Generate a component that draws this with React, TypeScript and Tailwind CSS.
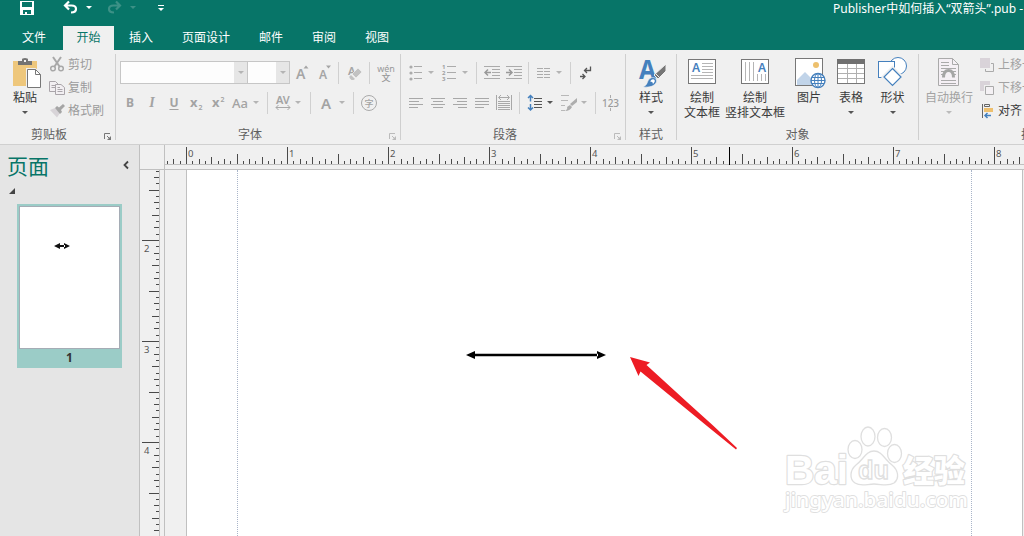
import type { ReactNode } from 'react';

const TABS = [
  { label: '文件', style: 'w-[58px] text-white' },
  { label: '开始', style: 'w-[51px] bg-[#f0f0f0] text-[#077568]' },
  { label: '插入', style: 'w-[54px] text-white' },
  { label: '页面设计', style: 'w-[76px] text-white' },
  { label: '邮件', style: 'w-[54px] text-white' },
  { label: '审阅', style: 'w-[52px] text-white' },
  { label: '视图', style: 'w-[54px] text-white' },
];

const INCH = 101;

function Caret({ className = '', color = '#b4b4b4' }: { className?: string; color?: string }) {
  return (
    <svg className={`shrink-0 ${className}`} width="6" height="3" viewBox="0 0 6 3">
      <path d="M0 0H6L3 3Z" fill={color} />
    </svg>
  );
}

function Sep({ className = '' }: { className?: string }) {
  return <div className={`w-px h-[22px] shrink-0 bg-[#d0d0d0] ${className}`} />;
}

function GroupSep() {
  return <div className="mt-1 h-[86px] w-px shrink-0 bg-[#cfcfcf]" />;
}

interface GroupProps {
  label: string;
  width: string;
  launcher?: string;
  labelStyle?: string;
  children: ReactNode;
}

function Group({ label, width, launcher, labelStyle = 'text-center', children }: GroupProps) {
  return (
    <div className={`flex shrink-0 flex-col ${width}`}>
      <div className="h-[75px] shrink-0">{children}</div>
      <div className="flex h-[18px] items-center">
        <span className={`flex-1 pt-px text-[#5f5f5f] ${labelStyle}`}>{label}</span>
        {launcher && (
          <svg className="mt-[5px] mr-1 shrink-0" width="7" height="7" viewBox="0 0 7 7" stroke={launcher} fill="none">
            <path d="M0.500 6V0.500H6M3 3L5.500 5.500" />
            <path d="M7 3V7H3Z" fill={launcher} stroke="none" />
          </svg>
        )}
      </div>
    </div>
  );
}

function Icon({ w, h = 16, className = '', children }: { w: number; h?: number; className?: string; children: ReactNode }) {
  return (
    <svg className={`shrink-0 overflow-visible ${className}`} width={w} height={h} viewBox={`0 0 ${w} ${h}`} fill="none">
      {children}
    </svg>
  );
}

function ClipboardGroup() {
  return (
    <Group label="剪贴板" width="w-[115px]" launcher="#777" labelStyle="text-center pr-[6px]">
      <div className="flex">
        <div className="flex w-[50px] flex-col items-center pt-2 text-[#333]">
          <Icon w={28} h={30} className="ml-[4px]">
            <path d="M0 3H24V28H0Z" fill="#eec77c" />
            <path d="M5 7V3H9V1.500Q9 0 12 0Q15 0 15 1.500V3H19V7Z" fill="#737373" />
            <path d="M11 2H13V4H11Z" fill="#f0f0f0" />
            <path d="M13 10H22.500L28 15V30H13Z" fill="#f0f0f0" />
            <path d="M14.500 11.500H22.500L27.500 16.500V29.500H14.500Z" fill="#fff" stroke="#777" />
            <path d="M22.500 11.500V16.500H27.500" stroke="#777" />
          </Icon>
          <span className="mt-px leading-[18px]">粘贴</span>
          <Caret className="mt-[4px]" color="#555" />
        </div>
        <div className="flex flex-col pt-[3px] text-[#9b9b9b]">
          <div className="flex h-[23px] items-center gap-1">
            <Icon w={14} h={15}>
              <g stroke="#a8a8a8" strokeWidth="1.500">
                <path d="M3 0L9.500 9.500M11 0L4.500 9.500" strokeWidth="2" />
                <circle cx="3" cy="11.500" r="2.300" />
                <circle cx="11" cy="11.500" r="2.300" />
              </g>
            </Icon>
            剪切
          </div>
          <div className="flex h-[23px] items-center gap-1">
            <Icon w={14} h={14}>
              <g stroke="#aaa5aa" fill="#f2eff2">
                <path d="M-0.500 0.500H5.500L8.500 3.500V10.500H-0.500Z" />
                <path d="M1.500 4.500H5M1.500 6.500H5" />
                <path d="M5.500 3.500H11L14.500 6.500V13.500H5.500Z" />
                <path d="M7.500 6.500H10M7.500 8.500H12.500M7.500 10.500H12.500" />
              </g>
            </Icon>
            复制
          </div>
          <div className="flex h-[23px] items-center gap-1">
            <Icon w={15} h={14} className="-mr-px">
              <path d="M0 6L5 4L10 9L7 13.500Z" fill="#d8d4d8" />
              <path d="M5 4L7 2L9 3.500L13 0L15 2L11 6L12 8L10 10Z" fill="#a5a5a5" />
            </Icon>
            格式刷
          </div>
        </div>
      </div>
    </Group>
  );
}

function FontGroup() {
  return (
    <Group label="字体" width="w-[284px]" launcher="#bbb" labelStyle="text-center pr-[5px]">
      <div className="flex h-[45px] items-center">
        <div className="ml-[4px] flex h-[23px] w-[128px] justify-end border border-[#c6c6c6] bg-[#fdfdfd]">
          <div className="flex w-[13px] items-center justify-center bg-[#e6e6e6]"><Caret /></div>
        </div>
        <div className="-ml-px flex h-[23px] w-[43px] justify-end border border-[#c6c6c6] bg-[#fdfdfd]">
          <div className="flex w-[13px] items-center justify-center bg-[#e6e6e6]"><Caret /></div>
        </div>
        <Icon w={13} className="ml-[6px]">
          <text x="0" y="14" fontSize="14" fontWeight="600" fill="#a5a5a5">A</text>
          <path d="M7.500 3.500L10 0.500L12.500 3.500Z" fill="#a5a5a5" />
        </Icon>
        <Icon w={12} className="ml-[10px]">
          <text x="0" y="14" fontSize="12" fontWeight="600" fill="#a5a5a5">A</text>
          <path d="M7 0.500L9.500 3.500L12 0.500Z" fill="#a5a5a5" />
        </Icon>
        <Sep className="ml-[7px]" />
        <Icon w={15} className="ml-[8px]">
          <text x="1" y="10" fontSize="11" fontWeight="600" fill="#a5a5a5">A</text>
          <path d="M5 9L11 3L15 7L9 13Z" fill="#c2c2c2" stroke="#f0f0f0" strokeWidth="0.700" />
          <path d="M4 10L8 14L6.500 15H4.500L2.500 13V11.500Z" fill="#c2c2c2" />
        </Icon>
        <Sep className="ml-[7px]" />
        <div className="ml-[7px] flex w-[18px] flex-col items-center text-[9px] leading-[9px] text-[#999]">
          <span>wén</span>
          <span className="font-medium">文</span>
        </div>
      </div>
      <div className="-mt-[4px] flex h-[23px] items-center text-[12px] font-bold text-[#a3a3a3]">
        <span className="ml-[9px] w-[10px] text-center">B</span>
        <span className="ml-[12px] w-[10px] text-center font-['Liberation_Serif',serif] text-[14px] italic">I</span>
        <span className="ml-[12px] w-[10px] text-center underline underline-offset-2">U</span>
        <Icon w={13} className="ml-[11px]">
          <text x="0" y="12" fontSize="13" fontWeight="700" fill="#a3a3a3">x</text>
          <text x="8.500" y="15" fontSize="7" fontWeight="600" fill="#a3a3a3">2</text>
        </Icon>
        <Icon w={13} className="ml-[9px]">
          <text x="0" y="12" fontSize="13" fontWeight="700" fill="#a3a3a3">x</text>
          <text x="8.500" y="7" fontSize="7" fontWeight="600" fill="#a3a3a3">2</text>
        </Icon>
        <span className="ml-[7px] w-[16px] text-[13px] font-medium">Aa</span>
        <Caret className="ml-[5px]" />
        <Sep className="ml-[8px]" />
        <Icon w={17} className="ml-[7px]">
          <text x="1" y="9" fontSize="11" fontWeight="600" fill="#a3a3a3" letterSpacing="-0.300">AV</text>
          <path d="M1 12.500H15M3.500 10L1 12.500L3.500 15M12.500 10L15 12.500L12.500 15" stroke="#a8a8a8" />
        </Icon>
        <Caret className="ml-[3px]" />
        <Sep className="ml-[9px]" />
        <span className="ml-[10px] w-[10px] text-[15px] font-semibold">A</span>
        <Caret className="ml-[8px]" />
        <Sep className="ml-[8px]" />
        <Icon w={16} className="ml-[7px]">
          <circle cx="8" cy="8" r="7.500" stroke="#aaa" />
          <text x="3.500" y="11.500" fontSize="9" fontWeight="500" fill="#a3a3a3">字</text>
        </Icon>
      </div>
    </Group>
  );
}

function ParagraphGroup() {
  return (
    <Group label="段落" width="w-[224px]" launcher="#bbb" labelStyle="text-center pr-[5px]">
      <div className="flex h-[45px] items-center">
        <Icon w={14} className="ml-[8px]">
          <g fill="#ababab"><circle cx="2" cy="2" r="1.600" /><circle cx="2" cy="8" r="1.600" /><circle cx="2" cy="14" r="1.600" /></g>
          <path d="M5 1.500H13M5 7.500H13M5 13.500H13" stroke="#ababab" />
        </Icon>
        <Caret className="ml-[5px]" />
        <Icon w={15} className="ml-[8px]">
          <g fontSize="6" fontWeight="700" fill="#a0a0a0"><text x="0" y="4">1</text><text x="0" y="10">2</text><text x="0" y="16">3</text></g>
          <path d="M5 1.500H14M5 7.500H14M5 13.500H14" stroke="#ababab" />
        </Icon>
        <Caret className="ml-[5px]" />
        <Sep className="ml-[8px]" />
        <Icon w={16} className="ml-[7px]">
          <path d="M0 1.500H16M8 4.500H16M8 7.500H16M8 10.500H16M0 13.500H16" stroke="#ababab" />
          <path d="M7 7.500H1M4 4.500L1 7.500L4 10.500" stroke="#999" strokeWidth="1.500" />
        </Icon>
        <Icon w={16} className="ml-[6px]">
          <path d="M0 1.500H16M8 4.500H16M8 7.500H16M8 10.500H16M0 13.500H16" stroke="#ababab" />
          <path d="M0 7.500H6M3 4.500L6 7.500L3 10.500" stroke="#999" strokeWidth="1.500" />
        </Icon>
        <Sep className="ml-[6px]" />
        <Icon w={14} className="ml-[8px]">
          <path d="M0 3.500H6M7 3.500H13M0 6.500H6M7 6.500H13M0 9.500H6M7 9.500H13M0 12.500H6M7 12.500H13" stroke="#ababab" />
        </Icon>
        <Caret className="ml-[5px]" />
        <Sep className="ml-[8px]" />
        <Icon w={11} className="ml-[9px]">
          <path d="M10.500 1.500V5.500H4.500M7 3L4.500 5.500L7 8M0 11.500H5M2.500 9L5 11.500L2.500 14" stroke="#555" strokeWidth="1.300" />
        </Icon>
      </div>
      <div className="-mt-[4px] flex h-[23px] items-center">
        <Icon w={14} className="ml-[8px]"><path d="M0 3.500H14M0 6.500H10M0 9.500H14M0 12.500H9" stroke="#a8a8a8" /></Icon>
        <Icon w={14} className="ml-[8px]"><path d="M0 3.500H14M2 6.500H12M0 9.500H14M2 12.500H12" stroke="#a8a8a8" /></Icon>
        <Icon w={14} className="ml-[8px]"><path d="M0 3.500H14M4 6.500H14M0 9.500H14M5 12.500H14" stroke="#a8a8a8" /></Icon>
        <Icon w={14} className="ml-[8px]"><path d="M0 3.500H14M0 6.500H14M0 9.500H14M0 12.500H9" stroke="#a8a8a8" /></Icon>
        <Icon w={16} className="ml-[7px]">
          <path d="M0.500 0V15M15.500 0V15M2 6.500H14M2 8.500H14M2 10.500H14M2 12.500H14M2 14.500H14" stroke="#a8a8a8" />
          <path d="M3 2.500H13M5 0L2.500 2.500L5 5M11 0L13.500 2.500L11 5" stroke="#a8a8a8" />
        </Icon>
        <Sep className="ml-[7px]" />
        <Icon w={15} className="ml-[8px]">
          <path d="M2.500 0.500V6.500M0 3L2.500 0.500L5 3M2.500 9V15M0 12.500L2.500 15L5 12.500" stroke="#4580bd" strokeWidth="1.500" />
          <path d="M6 3.500H14M6 6.500H14M6 9.500H14M6 12.500H14" stroke="#555" />
        </Icon>
        <Caret className="ml-[4px]" color="#555" />
        <Icon w={16} className="ml-[8px]">
          <path d="M0 0.500H8M0 5.500H7M0 10.500H4M0 15.500H4" stroke="#b8b8b8" />
          <path d="M16 3V7L11 11L9 9ZM9 10L11 12Q9 16 4 16Q7 14 6 12Z" fill="#adadad" />
        </Icon>
        <Caret className="ml-[4px]" />
        <Sep className="ml-[8px]" />
        <Icon w={17} className="ml-[6px]">
          <text x="0" y="11.500" fontSize="10" fontWeight="500" fill="#9b9b9b" textLength="17">123</text>
          <path d="M8.500 0V3M8.500 13V16" stroke="#aaa" />
        </Icon>
      </div>
    </Group>
  );
}

interface BigButtonProps {
  icon: ReactNode;
  lines: string[];
  width: string;
  caret?: boolean;
  disabled?: boolean;
}

function BigButton({ icon, lines, width, caret, disabled }: BigButtonProps) {
  return (
    <div className={`flex shrink-0 flex-col items-center pt-[7px] whitespace-nowrap ${width} ${disabled ? 'text-[#a3a3a3]' : 'text-[#3b3b3b]'}`}>
      {icon}
      {lines.map((line) => (
        <span key={line} className="leading-[15px] first-of-type:mt-[2px]">{line}</span>
      ))}
      {caret && <Caret className="mt-[6px]" color={disabled ? '#bbb' : '#555'} />}
    </div>
  );
}

function StyleIcon() {
  return (
    <Icon w={28} h={31}>
      <text x="2" y="21.500" fontSize="27" fontWeight="700" fill="#4580bd" textLength="17" lengthAdjust="spacingAndGlyphs">A</text>
      <path d="M29 7V14L21 22L17 18Z" fill="#767676" stroke="#f0f0f0" />
      <path d="M19 17L22 20" stroke="#f0f0f0" />
      <path d="M6 30Q10 28 10.500 25Q12 20.500 16 20.500Q20 21 19.500 25Q17 31 6 30Z" fill="#4580bd" stroke="#f0f0f0" strokeWidth="0.600" />
      <path d="M13 24.500Q15 21.500 17 22.500Q19 24 16 27Q16 24 13 24.500Z" fill="#fff" />
    </Icon>
  );
}

function ObjectsGroup() {
  return (
    <Group label="对象" width="w-[241px]">
      <div className="flex">
        <BigButton
          width="w-[50px]"
          lines={['绘制', '文本框']}
          icon={
            <Icon w={28} h={31}>
              <rect x="0.500" y="2.500" width="27" height="24" fill="#fff" stroke="#777" />
              <text x="4" y="15" fontSize="12" fontWeight="600" fill="#4580bd">A</text>
              <path d="M14 6.500H25M14 9.500H25M14 12.500H25M14 15.500H25M3 18.500H25M3 21.500H25" stroke="#b5b5b5" />
            </Icon>
          }
        />
        <BigButton
          width="w-[56px]"
          lines={['绘制', '竖排文本框']}
          icon={
            <Icon w={28} h={31}>
              <rect x="0.500" y="2.500" width="27" height="24" fill="#fff" stroke="#777" />
              <text x="17" y="15" fontSize="12" fontWeight="600" fill="#4580bd">A</text>
              <path d="M4.500 5V24M8.500 5V24M12.500 5V24M16.500 17V24M20.500 17V24M24.500 17V24" stroke="#b5b5b5" />
            </Icon>
          }
        />
        <BigButton
          width="w-[52px]"
          lines={['图片']}
          icon={
            <Icon w={28} h={31}>
              <rect x="0.500" y="1.500" width="27" height="27" fill="#fff" stroke="#777" />
              <circle cx="21" cy="8" r="3" fill="#edc06d" />
              <path d="M2 28V23L10 15L18 23V28Z" fill="#c1d4e9" />
              <circle cx="23" cy="23.500" r="7" fill="#fff" stroke="#4580bd" strokeWidth="1.400" />
              <path d="M16 23.500H30M17 20.500H29M17 26.500H29M23 17V30" stroke="#4580bd" />
              <ellipse cx="23" cy="23.500" rx="3.500" ry="7" stroke="#4580bd" />
            </Icon>
          }
        />
        <BigButton
          width="w-[32px]"
          caret
          lines={['表格']}
          icon={
            <Icon w={28} h={31}>
              <rect x="0.500" y="2.500" width="27" height="24" fill="#fff" stroke="#777" />
              <path d="M0 2H28V7H0Z" fill="#707070" />
              <path d="M1 11.500H27M1 16.500H27M1 21.500H27M10.500 7V26M19.500 7V26" stroke="#b0b0b0" />
            </Icon>
          }
        />
        <BigButton
          width="w-[51px]"
          caret
          lines={['形状']}
          icon={
            <Icon w={29} h={31}>
              <circle cx="20" cy="9" r="8.500" fill="#fff" stroke="#4580bd" />
              <rect x="0.500" y="4.500" width="16" height="16" fill="#fff" stroke="#4580bd" />
              <path d="M14.500 10.500L24 20L14.500 29.500L5 20Z" fill="#fff" stroke="#f0f0f0" strokeWidth="3" />
              <path d="M14.500 11.500L23 20L14.500 28.500L6 20Z" fill="#fff" stroke="#4580bd" strokeWidth="1.200" />
            </Icon>
          }
        />
      </div>
    </Group>
  );
}

function ArrangeGroup() {
  return (
    <Group label="排列" width="w-[240px]" labelStyle="pl-[102px]">
      <div className="flex">
        <BigButton
          width="w-[60px]"
          caret
          disabled
          lines={['自动换行']}
          icon={
            <Icon w={22} h={31}>
              <path d="M0.500 1.500H14.500L20.500 7.500V28.500H0.500Z" fill="#f5f0f5" stroke="#aaa" />
              <path d="M14.500 1.500V7.500H20.500M3 5.500H11M3 8.500H11M3 11.500H18M3 14.500H6M15 14.500H18M3 17.500H5M16 17.500H18M3 23.500H18M3 26.500H18" stroke="#aaa" />
              <path d="M5.500 20.500Q5.500 13.500 10.500 13.500Q15.500 13.500 15.500 20.500" stroke="#a5a5a5" strokeWidth="3" />
            </Icon>
          }
        />
        <div className="flex flex-col pt-[3px] pl-[1px] whitespace-nowrap text-[#a3a3a3]">
          <div className="flex h-[23px] items-center gap-[4px]">
            <Icon w={14} h={14}>
              <path d="M5.500 13.500H13.500V5.500H5.500Z" stroke="#aaa" />
              <path d="M0 0H11V11H0Z" fill="#f0f0f0" />
              <path d="M0 0H10V10H0Z" fill="#d9d3d9" />
            </Icon>
            上移一层
          </div>
          <div className="flex h-[23px] items-center gap-[4px]">
            <Icon w={14} h={14}>
              <path d="M0 0H10V10H0Z" fill="#d9d3d9" />
              <path d="M4 4H14V14H4Z" fill="#f0f0f0" />
              <path d="M5.500 13.500H13.500V5.500H5.500Z" fill="#f4f1f4" stroke="#aaa" />
            </Icon>
            下移一层
          </div>
          <div className="flex h-[23px] items-center gap-[3px] text-[#3b3b3b]">
            <Icon w={13} h={14} className="ml-[2px]">
              <path d="M0.500 0V14M2.500 0.500H7.500V2.500H2.500Z" stroke="#666" />
              <path d="M2 4H11V8H2Z" fill="#eec06e" />
              <path d="M9 11.500H3M5.500 9L3 11.500L5.500 14" stroke="#4580bd" strokeWidth="1.500" />
            </Icon>
            对齐
          </div>
        </div>
      </div>
    </Group>
  );
}

// tick length by its place inside the inch, counted in sixteenths
function tickLength(i: number) {
  const n = ((i % 16) + 16) % 16;
  if (n === 0) return 17;
  if (n === 8) return 10;
  if (n % 4 === 0) return 7;
  return n % 2 === 0 ? 5 : 3;
}

function HorizontalRuler() {
  const ticks = Array.from({ length: 140 }, (_, k) => k - 3);
  return (
    <svg className="block h-[25px] w-full" shapeRendering="crispEdges">
      <rect y="19" width="100%" height="1" fill="#c0c0c0" />
      <rect y="24" width="100%" height="1" fill="#c0c0c0" />
      {ticks.map((i) => {
        const len = tickLength(i);
        return <rect key={i} x={21 + Math.round((i * INCH) / 16)} y={19 - len} width="1" height={len} fill="#4a4a4a" />;
      })}
      {[0, 1, 2, 3, 4, 5, 6, 7, 8].map((n) => (
        <text key={n} x={23 + n * INCH} y="12" fontSize="9.5" fill="#555">{n}</text>
      ))}
      <rect x="564" y="2" width="1" height="18" fill="#000" />
    </svg>
  );
}

function VerticalRuler() {
  const ticks = Array.from({ length: 60 }, (_, k) => k - 11);
  return (
    <svg className="block h-[366px] w-[25px]" shapeRendering="crispEdges">
      <rect x="19" width="1" height="100%" fill="#c0c0c0" />
      <rect x="24" width="1" height="100%" fill="#c0c0c0" />
      {ticks.map((i) => {
        const len = tickLength(i);
        return <rect key={i} x={19 - len} y={70 + Math.round((i * INCH) / 16)} width={len} height="1" fill="#4a4a4a" />;
      })}
      {[2, 3, 4].map((n) => (
        <text key={n} x="4" y={82 + (n - 2) * INCH} fontSize="9.5" fill="#555">{n}</text>
      ))}
    </svg>
  );
}

function PagesPanel() {
  return (
    <aside className="flex w-[139px] shrink-0 flex-col bg-[#e5e5e5]">
      <div className="flex h-[42px] items-center justify-between pr-[10px] pl-[7px]">
        <span className="text-[21px] text-[#077568]">页面</span>
        <Icon w={6} h={8} className="-mt-[2px]"><path d="M5 0.500L1.500 4L5 7.500" stroke="#444" strokeWidth="1.800" /></Icon>
      </div>
      <Icon w={6} h={6} className="mt-[1px] ml-[9px]"><path d="M6 0V6H0Z" fill="#444" /></Icon>
      <div className="mt-[10px] ml-[17px] flex h-[164px] w-[105px] flex-col items-center bg-[#9bccc7] pt-[2px]">
        <div className="h-[143px] w-[101px] border border-[#a5acb5] bg-white">
          <Icon w={16} h={6} className="mt-[36px] ml-[34px]">
            <path d="M0 3L6 0V6ZM16 3L10 0V6ZM5 2H11V4H5Z" fill="#111" />
          </Icon>
        </div>
        <span className="text-[12px] leading-[18px] font-bold text-[#333]">1</span>
      </div>
    </aside>
  );
}

function Watermark() {
  return (
    <svg className="absolute top-[252px] left-[614px]" width="200" height="100" viewBox="0 0 200 100">
      <g fill="#fff" stroke="#dfdfdf" strokeWidth="1.300">
        <g strokeWidth="2.400" paintOrder="stroke" fontWeight="700" strokeLinejoin="round">
          <text x="6" y="62" fontSize="40" textLength="63" lengthAdjust="spacingAndGlyphs" fontFamily="Liberation Sans">Bai</text>
          <text x="124" y="60" fontSize="31" fontWeight="900" textLength="62">经验</text>
          <text x="6" y="85" fontSize="20" fontWeight="500" strokeWidth="1.800" textLength="183" lengthAdjust="spacingAndGlyphs">jingyan.baidu.com</text>
        </g>
        <ellipse cx="76" cy="27.500" rx="7" ry="9" />
        <ellipse cx="89" cy="14.500" rx="7" ry="9.500" />
        <ellipse cx="105.500" cy="15.500" rx="7" ry="9" />
        <ellipse cx="115.500" cy="31.500" rx="7" ry="9" />
        <path d="M95 29C87 29 84 38 77 43C71 48 70 57 76 61C82 65 88 62 95 62C102 62 109 65 115 61C121 56 119 48 113 43C106 38 103 29 95 29Z" />
        <text x="79" y="57" fontSize="25" fontWeight="700" textLength="31" lengthAdjust="spacingAndGlyphs" fontFamily="Liberation Sans">du</text>
      </g>
    </svg>
  );
}

function Workspace() {
  return (
    <main className="flex min-w-0 flex-1 flex-col border-l border-[#c0c0c0] bg-[#f0f0f0]">
      <div className="flex h-[25px]">
        <div className="w-[25px] shrink-0 border-r border-b border-[#c0c0c0]" />
        <div className="min-w-0 flex-1"><HorizontalRuler /></div>
      </div>
      <div className="flex min-h-0 flex-1">
        <VerticalRuler />
        <div className="relative flex min-w-0 flex-1 overflow-hidden pl-[21px]">
          <div className="flex w-[837px] shrink-0 justify-center border-x border-[#c0c0c0] bg-white">
            <div className="mr-px w-[735px] border-x border-dotted border-[#a9b5c9]" />
          </div>
          <svg className="absolute top-[181px] left-[301px]" width="140" height="8" viewBox="0 0 140 8">
            <path d="M0 4L9 0V8ZM140 4L131 0V8ZM8 2.700H132V5.300H8Z" fill="#000" />
          </svg>
          <svg className="absolute top-[187px] left-[465px]" width="108" height="93" viewBox="0 0 108 93">
            <path d="M0 0L20 5.500L16.500 8L57 45Q83 68 107 91L106 92.500Q78 70 49 46L10.500 14.500L8.500 19Z" fill="#ed1c24" />
          </svg>
          <Watermark />
        </div>
      </div>
    </main>
  );
}

export default function App() {
  return (
    <div className="flex h-[536px] w-[1024px] flex-col overflow-hidden bg-[#f0f0f0] font-['Noto_Sans','Noto_Sans_CJK_SC',sans-serif] text-[12px] leading-[16px]">
      <header className="flex h-[50px] shrink-0 flex-col bg-[#077568]">
        <div className="flex h-[26px] shrink-0">
          <Icon w={14} h={14} className="mt-px ml-[20px]">
            <path d="M0 0H14V14H0Z" fill="#fff" />
            <path d="M2 1H12V6H2ZM3 9H11V13H7V11H5V13H3Z" fill="#077568" />
          </Icon>
          <Icon w={15} h={13} className="mt-px ml-[29px]">
            <path d="M2 4.500H8.500Q13 4.500 13 8Q13 11.500 8 11.500M6 0.500L2 4.500L6 8.500" stroke="#fff" strokeWidth="2.200" />
          </Icon>
          <Caret className="mt-[6px] ml-[8px]" color="#fff" />
          <Icon w={15} h={13} className="mt-px ml-[15px]">
            <path d="M13 4.500H6.500Q2 4.500 2 8Q2 11.500 7 11.500M9 0.500L13 4.500L9 8.500" stroke="#3c9186" strokeWidth="2.200" />
          </Icon>
          <Caret className="mt-[6px] ml-[8px]" color="#3c9186" />
          <Icon w={6} h={6} className="mt-[5px] ml-[22px]">
            <path d="M0 0.500H6" stroke="#fff" />
            <path d="M0 3H6L3 6Z" fill="#fff" />
          </Icon>
          <span className="mt-px ml-auto w-[191px] text-[12px] whitespace-nowrap text-white">Publisher中如何插入“双箭头”.pub -</span>
        </div>
        <nav className="flex h-[24px] pl-[5px]">
          {TABS.map((tab) => (
            <div key={tab.label} className={`flex items-center justify-center pb-px ${tab.style}`}>{tab.label}</div>
          ))}
        </nav>
      </header>
      <div className="flex h-[95px] shrink-0 overflow-hidden border-b border-[#d0d0d0]">
        <ClipboardGroup />
        <GroupSep />
        <FontGroup />
        <GroupSep />
        <ParagraphGroup />
        <GroupSep />
        <Group label="样式" width="w-[50px]">
          <BigButton width="w-[50px]" caret lines={['样式']} icon={<StyleIcon />} />
        </Group>
        <GroupSep />
        <ObjectsGroup />
        <GroupSep />
        <ArrangeGroup />
      </div>
      <div className="flex min-h-0 flex-1">
        <PagesPanel />
        <Workspace />
      </div>
    </div>
  );
}
